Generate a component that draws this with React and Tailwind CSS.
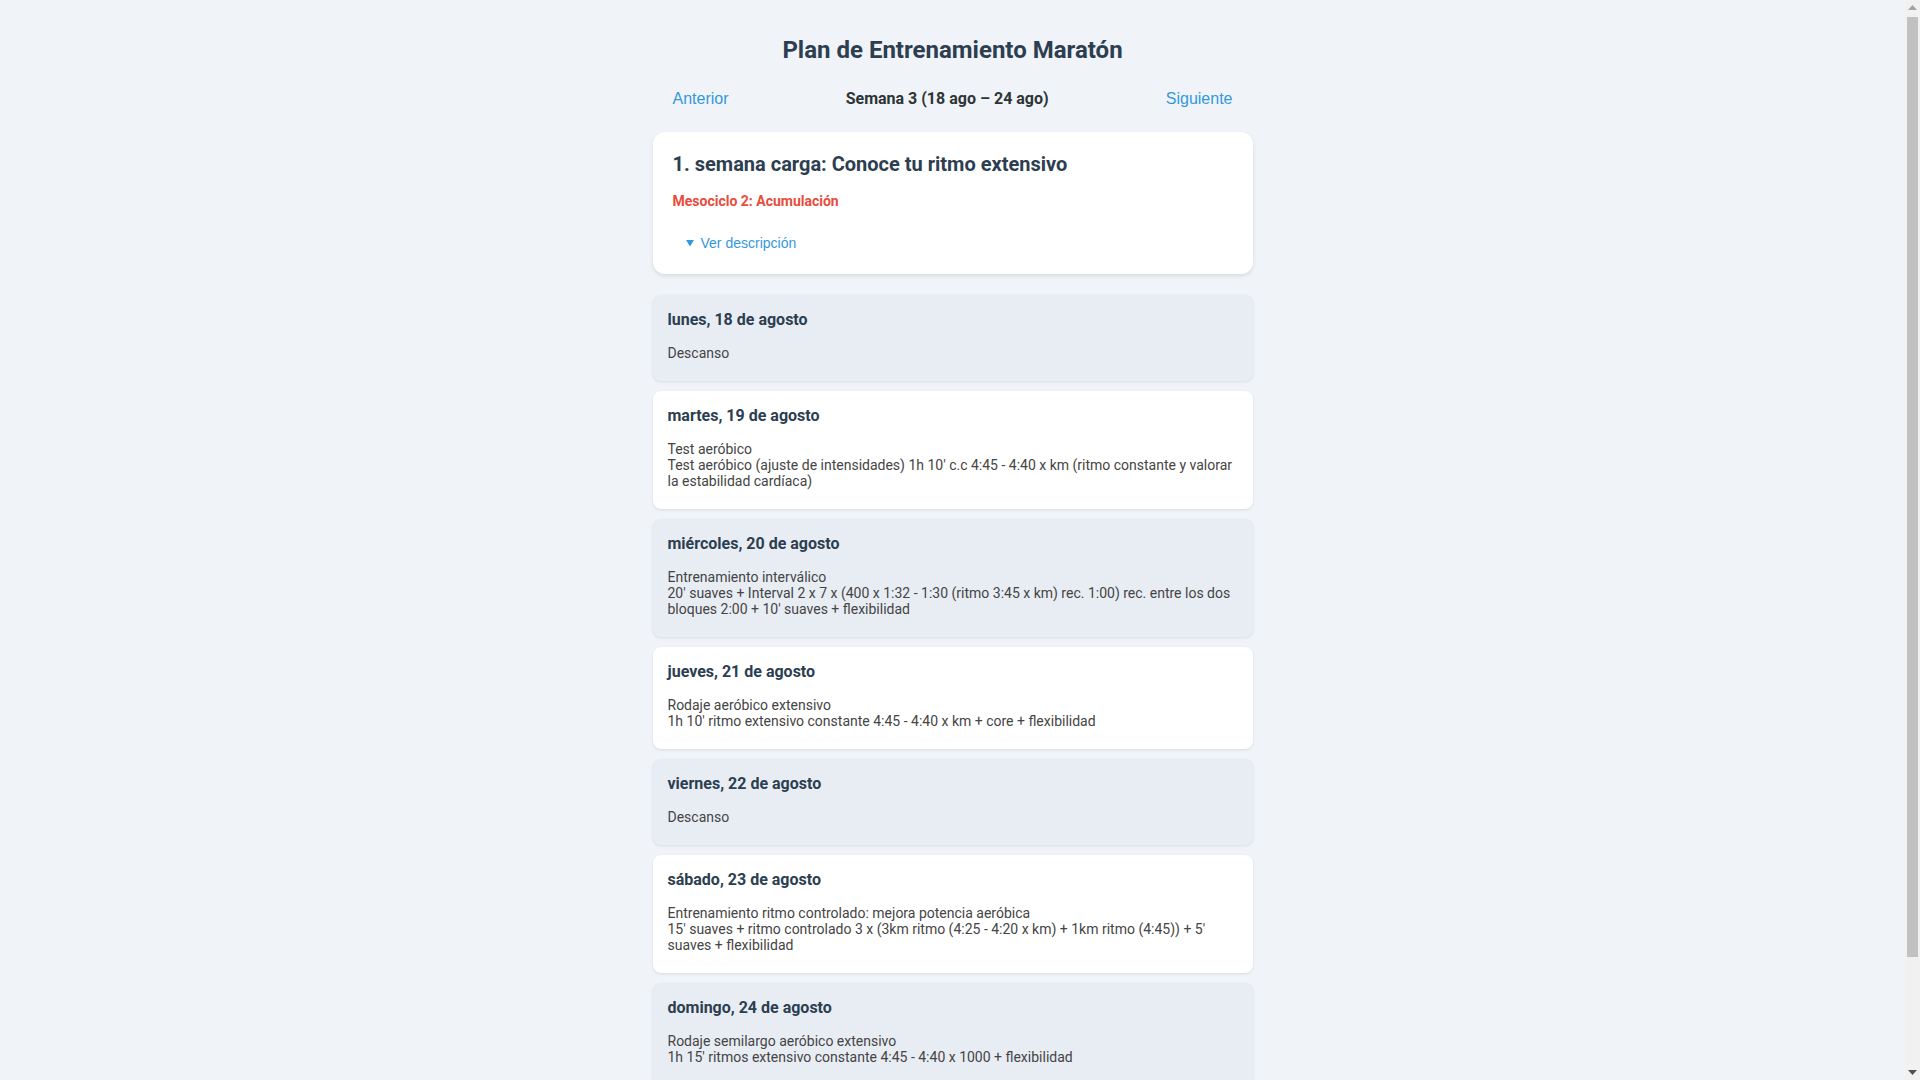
import React from "react";

const days = [
  { title: "lunes, 18 de agosto", lines: ["Descanso"] },
  {
    title: "martes, 19 de agosto",
    lines: [
      "Test aeróbico",
      "Test aeróbico (ajuste de intensidades) 1h 10' c.c 4:45 - 4:40 x km (ritmo constante y valorar la estabilidad cardíaca)",
    ],
  },
  {
    title: "miércoles, 20 de agosto",
    lines: [
      "Entrenamiento interválico",
      "20' suaves + Interval 2 x 7 x (400 x 1:32 - 1:30 (ritmo 3:45 x km) rec. 1:00) rec. entre los dos bloques 2:00 + 10' suaves + flexibilidad",
    ],
  },
  {
    title: "jueves, 21 de agosto",
    lines: [
      "Rodaje aeróbico extensivo",
      "1h 10' ritmo extensivo constante 4:45 - 4:40 x km + core + flexibilidad",
    ],
  },
  { title: "viernes, 22 de agosto", lines: ["Descanso"] },
  {
    title: "sábado, 23 de agosto",
    lines: [
      "Entrenamiento ritmo controlado: mejora potencia aeróbica",
      "15' suaves + ritmo controlado 3 x (3km ritmo (4:25 - 4:20 x km) + 1km ritmo (4:45)) + 5' suaves + flexibilidad",
    ],
  },
  {
    title: "domingo, 24 de agosto",
    lines: [
      "Rodaje semilargo aeróbico extensivo",
      "1h 15' ritmos extensivo constante 4:45 - 4:40 x 1000 + flexibilidad",
    ],
  },
];

function Scrollbar() {
  return (
    <div className="fixed top-0 right-0 flex h-screen w-[15px] flex-col items-center bg-[#f1f1f1]">
      <div className="flex h-[15px] w-full items-center justify-center">
        <svg width="9" height="5" viewBox="0 0 9 5">
          <polygon points="4.5,0 9,5 0,5" fill="#a3a3a3" />
        </svg>
      </div>
      <div className="mt-[2px] h-[940px] w-[11px] bg-[#c1c1c1]" />
      <div className="flex-1" />
      <div className="flex h-[15px] w-full items-center justify-center">
        <svg width="9" height="5" viewBox="0 0 9 5">
          <polygon points="0,0 9,0 4.5,5" fill="#505050" />
        </svg>
      </div>
    </div>
  );
}

export default function App() {
  return (
    <div className="min-h-screen bg-[#f0f4f8] pr-[15px] font-['Roboto','Liberation_Sans',sans-serif]">
      <div className="mx-auto w-[600px] pt-[36px] pb-[117px]">
        <h1 className="text-center text-[24px] leading-[28px] font-bold text-[#2c3e50]">
          Plan de Entrenamiento Maratón
        </h1>

        <div className="mt-[25px] flex h-[19px] items-center justify-between px-[20px]">
          <button className="font-['Liberation_Sans',Arial,sans-serif] text-[16px] leading-[19px] text-[#3498db]">
            Anterior
          </button>
          <span className="text-[16px] leading-[19px] font-bold text-[#2d3436]">
            Semana 3 (18 ago – 24 ago)
          </span>
          <button className="font-['Liberation_Sans',Arial,sans-serif] text-[16px] leading-[19px] text-[#3498db]">
            Siguiente
          </button>
        </div>

        <div className="mt-[24px] rounded-[12px] bg-white px-[20px] pt-[20px] pb-[23px] shadow-[0_2px_4px_rgba(0,0,0,0.1)]">
          <h2 className="text-[20px] leading-[24px] font-bold text-[#2c3e50]">
            1. semana carga: Conoce tu ritmo extensivo
          </h2>
          <p className="mt-[17px] text-[14px] leading-[16px] font-bold text-[#e74c3c]">
            Mesociclo 2: Acumulación
          </p>
          <button className="mt-[26px] ml-[13px] flex h-[16px] items-center font-['Liberation_Sans',Arial,sans-serif] text-[14px] leading-[16px] text-[#3498db]">
            <svg width="8" height="7" viewBox="0 0 8 7" className="mr-[7px]">
              <polygon points="0,0 8,0 4,6.5" fill="#3498db" />
            </svg>
            Ver descripción
          </button>
        </div>

        <div className="mt-[21px] flex flex-col gap-[10px]">
          {days.map((d, i) => (
            <div
              key={d.title}
              className={`rounded-[8px] px-[15px] pt-[15px] pb-[20px] shadow-[0_1px_3px_rgba(0,0,0,0.1)] ${
                i % 2 === 0 ? "bg-[#e8edf4]" : "bg-white"
              }`}
            >
              <h3 className="text-[16px] leading-[19px] font-bold text-[#2c3e50]">
                {d.title}
              </h3>
              <div className="mt-[16px] text-[14px] leading-[16px] text-[#444444]">
                {d.lines.map((l) => (
                  <p key={l}>{l}</p>
                ))}
              </div>
            </div>
          ))}
        </div>
      </div>
      <Scrollbar />
    </div>
  );
}
